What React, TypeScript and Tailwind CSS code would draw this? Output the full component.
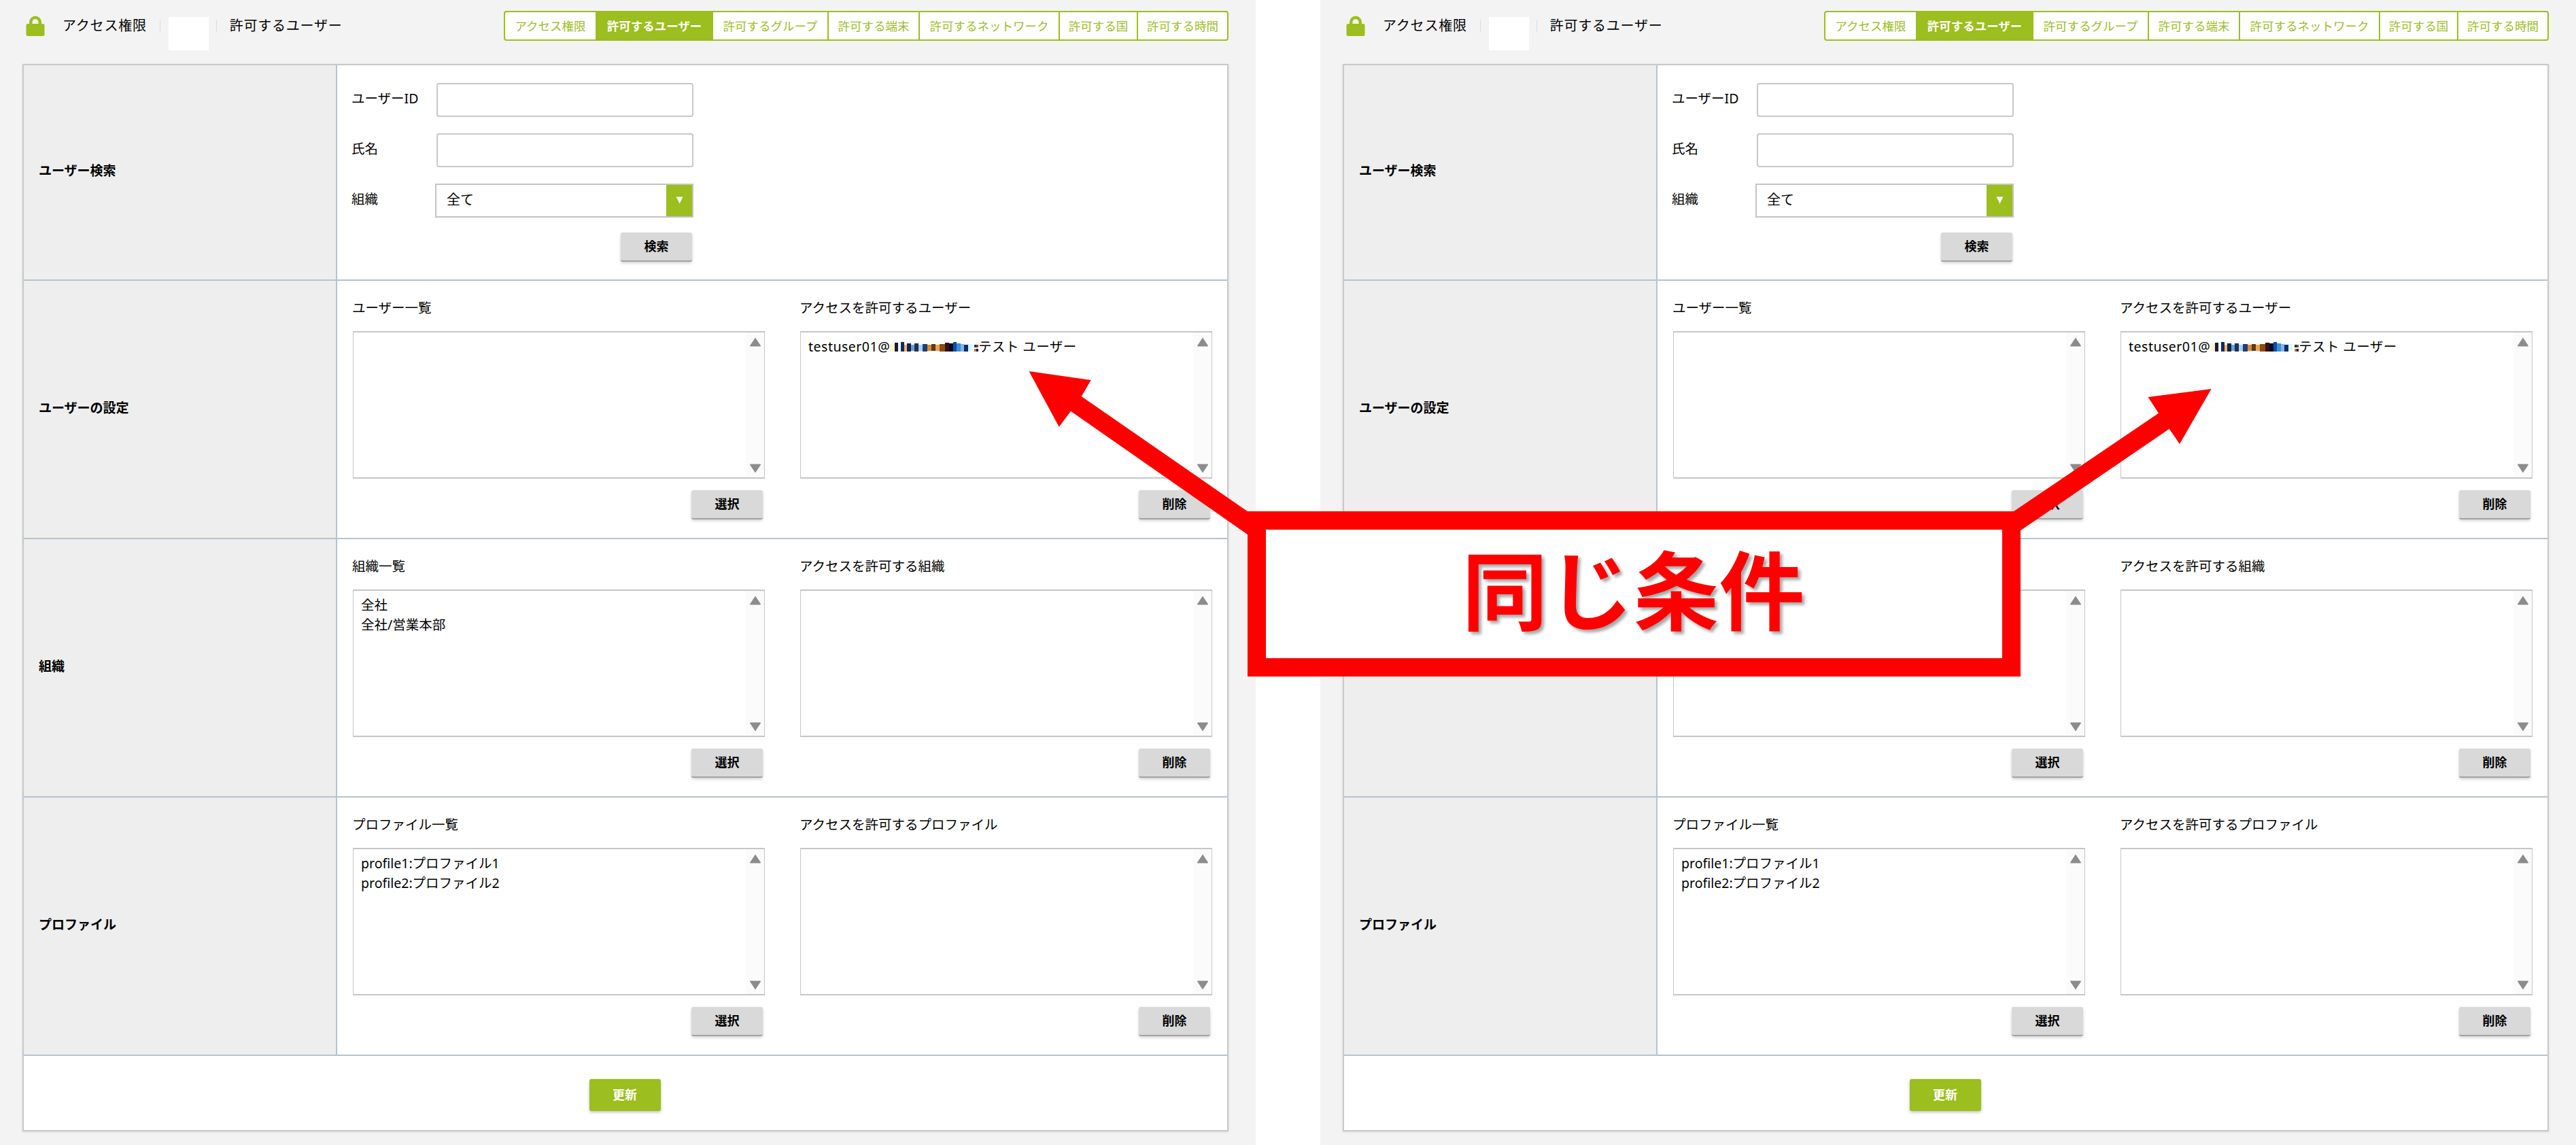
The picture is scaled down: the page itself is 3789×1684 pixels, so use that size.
import type { ReactNode } from "react";

const tabs: [string, string, boolean][] = [
  ["アクセス権限", "w-[133px]", false],
  ["許可するユーザー", "w-[171px]", true],
  ["許可するグループ", "w-[170px]", false],
  ["許可する端末", "w-[134px]", false],
  ["許可するネットワーク", "w-[206px]", false],
  ["許可する国", "w-[115px]", false],
  ["許可する時間", "w-[133px]", false],
];

function Lock() {
  return (
    <svg width="28" height="30" viewBox="0 0 28 30" className="shrink-0">
      <path d="M5 14V9.5a9 9 0 0 1 18 0V14h-4.5V9.5a4.5 4.5 0 0 0-9 0V14z" fill="#9cbe1e" />
      <rect x="0.5" y="12" width="27" height="18" rx="2.5" fill="#9cbe1e" />
    </svg>
  );
}

function Header() {
  return (
    <div className="flex h-[94px] items-start">
      <div className="ml-[5px] mt-[23px]">
        <Lock />
      </div>
      <span className="ml-[26px] mt-[23px] text-[20px] leading-[30px] tracking-[0.8px] text-black">アクセス権限</span>
      <div className="ml-[19px] mt-[29px] h-[18px] w-px bg-[#dddddd]" />
      <div className="ml-[12px] mt-[25px] h-[49px] w-[59px] bg-white" />
      <div className="ml-[11px] mt-[29px] h-[18px] w-px bg-[#dddddd]" />
      <span className="ml-[19px] mt-[23px] text-[20px] leading-[30px] tracking-[0.75px] text-black">許可するユーザー</span>
      <div className="ml-auto mt-[16px] flex h-[44px] overflow-hidden rounded-[4px] border-2 border-[#9cbe1e] bg-white">
        {tabs.map(([label, w, active], i) => (
          <div
            key={label}
            className={`${w} flex items-center justify-center text-[17.5px] ${i > 0 ? "border-l-2 border-[#9cbe1e]" : ""} ${active ? "bg-[#9cbe1e] font-bold text-white" : "text-[#9cbe1e]"}`}
          >
            {label}
          </div>
        ))}
      </div>
    </div>
  );
}

function Btn({ children }: { children: string }) {
  return (
    <button className="h-[43px] w-[105px] rounded-[3px] border-b-2 border-[#a3a3a3] bg-[#d9d9d9] text-[18px] font-bold text-black shadow-[0_2px_4px_rgba(0,0,0,0.18)]">
      {children}
    </button>
  );
}

function Noise() {
  const cells: [number, number, number, number, string][] = [
    [0, 7, 3, 10, "#fff3c8"], [7, 5, 1, 13, "#1a1a3a"], [12, 4, 5, 8, "#f7fbff"], [16, 5, 0, 14, "#0d2c6b"], [21, 4, 4, 10, "#f5b565"],
    [25, 6, 2, 12, "#11244f"], [31, 5, 4, 9, "#5aa7e0"], [36, 6, 2, 12, "#2b2b55"], [42, 6, 4, 9, "#9fd4f5"], [48, 7, 3, 11, "#1d3d7c"],
    [55, 6, 4, 9, "#d98a34"], [61, 6, 3, 10, "#5b3a1f"], [67, 6, 4, 9, "#f0a24a"], [73, 8, 3, 11, "#8a4a1a"], [81, 6, 1, 13, "#3a0f0f"],
    [87, 6, 2, 12, "#0a0a20"], [93, 5, 0, 14, "#0b4fa8"], [98, 6, 2, 12, "#3f8fd8"], [104, 5, 3, 11, "#7fb6e6"], [109, 6, 4, 10, "#0d2c6b"],
    [115, 6, 3, 10, "#d9f7fb"], [124, 3, 4, 4, "#22324f"], [124, 3, 10, 4, "#c8741f"], [127, 3, 4, 4, "#7a4a22"], [127, 3, 10, 4, "#0c1f4a"],
  ];
  return (
    <svg width="130" height="16" viewBox="0 0 130 16" className="inline-block align-[-2px]">
      {cells.map(([x, w, y, h, c], i) => (
        <rect key={i} x={x} y={y} width={w} height={h} fill={c} />
      ))}
    </svg>
  );
}

function ListBox({ lines }: { lines: ReactNode[] }) {
  return (
    <div className="flex h-[217px] border-2 border-x-[1.5px] border-[#c6c6c6] bg-white">
      <div className="flex-1 pl-[11px] pt-[6px] text-[19.5px] leading-[29px] text-black">
        {lines.map((l, i) => (
          <div key={i}>{l}</div>
        ))}
      </div>
      <div className="flex w-[27px] flex-col items-center justify-between bg-[#fbfbfb] pb-[6px] pt-[7px]">
        <svg width="18" height="14" viewBox="0 0 18 14"><path d="M9 0.5 17 12.5a1 1 0 0 1-1 1H2a1 1 0 0 1-1-1z" fill="#8c8c8c" /></svg>
        <svg width="18" height="14" viewBox="0 0 18 14"><path d="M2 0.5h14a1 1 0 0 1 1 1L9 13.5 1 1.5a1 1 0 0 1 1-1z" fill="#8c8c8c" /></svg>
      </div>
    </div>
  );
}

function Column({ title, lines, action }: { title: string; lines: ReactNode[]; action: string }) {
  return (
    <div>
      <div className="mb-[20px] -ml-[1px] h-[28px] text-[19.5px] leading-[28px] text-black">{title}</div>
      <ListBox lines={lines} />
      <div className="mt-[17px] flex justify-end pr-[3px]">
        <Btn>{action}</Btn>
      </div>
    </div>
  );
}

function RowLabel({ children }: { children: string }) {
  return (
    <div className="flex w-[461px] shrink-0 items-center border-r-2 border-[#b4c4ce] bg-[#eeeeee] pb-[4px] pl-[22px] text-[19px] font-bold text-black">
      {children}
    </div>
  );
}

function Row({ label, left, leftLines, right, rightLines }: { label: string; left: string; leftLines: ReactNode[]; right: string; rightLines: ReactNode[] }) {
  return (
    <div className="flex h-[380px] border-b-2 border-[#b4c4ce]">
      <RowLabel>{label}</RowLabel>
      <div className="grid flex-1 grid-cols-2 gap-x-[52px] pl-[23px] pr-[22px] pt-[26px]">
        <Column title={left} lines={leftLines} action="選択" />
        <Column title={right} lines={rightLines} action="削除" />
      </div>
    </div>
  );
}

function Field({ label }: { label: string }) {
  return (
    <div className="flex h-[50px] items-center">
      <span className="w-[125px] pb-[4px] text-[19.5px] text-black">{label}</span>
      <input className="h-[50px] w-[378px] rounded-[4px] border-2 border-[#c8c8c8] bg-white" readOnly />
    </div>
  );
}

function Screen() {
  return (
    <div className="h-full w-[1847px] shrink-0 bg-[#f3f3f3] pl-[33px] pr-[40px]">
      <Header />
      <div className="border-2 border-[#c9c9c9] bg-white shadow-[0_1px_3px_rgba(0,0,0,0.12)]">
        <div className="flex h-[317px] border-b-2 border-[#b4c4ce]">
          <RowLabel>ユーザー検索</RowLabel>
          <div className="flex flex-1 flex-col gap-[24px] pl-[21px] pt-[26px]">
            <Field label="ユーザーID" />
            <Field label="氏名" />
            <div className="flex h-[50px] items-center">
              <span className="w-[123px] pb-[4px] text-[19.5px] text-black">組織</span>
              <div className="flex h-[50px] w-[380px] border-2 border-[#c4c4c4] bg-white">
                <span className="flex-1 pl-[15px] text-[20px] leading-[44px] text-black">全て</span>
                <div className="flex w-[38px] items-center justify-center bg-[#9cbe1e] pb-[2px]">
                  <svg width="11" height="11" viewBox="0 0 11 11"><path d="M0.5 0.5h10L5.5 10.5z" fill="#fff" /></svg>
                </div>
              </div>
            </div>
            <div className="-mt-[2px] w-[501px] text-right">
              <Btn>検索</Btn>
            </div>
          </div>
        </div>
        <Row
          label="ユーザーの設定"
          left="ユーザー一覧"
          leftLines={[]}
          right="アクセスを許可するユーザー"
          rightLines={[<span key="u" className="whitespace-nowrap"><span className="tracking-[0.5px]">testuser01@</span><Noise /><span className="tracking-[0.4px]">テスト ユーザー</span></span>]}
        />
        <Row label="組織" left="組織一覧" leftLines={["全社", "全社/営業本部"]} right="アクセスを許可する組織" rightLines={[]} />
        <Row label="プロファイル" left="プロファイル一覧" leftLines={["profile1:プロファイル1", "profile2:プロファイル2"]} right="アクセスを許可するプロファイル" rightLines={[]} />
        <div className="flex h-[109px] items-start justify-center pr-[2px] pt-[34px]">
          <button className="h-[47px] w-[105px] rounded-[3px] bg-[#9cbe1e] text-[18px] font-bold text-white shadow-[0_2px_4px_rgba(0,0,0,0.25)]">更新</button>
        </div>
      </div>
    </div>
  );
}

export default function App() {
  return (
    <div className="relative flex h-[1684px] w-[3789px] overflow-hidden bg-white font-['Noto_Sans','Noto_Sans_CJK_JP',sans-serif]">
      <Screen />
      <div className="w-[95px] shrink-0" />
      <Screen />
      <svg className="pointer-events-none absolute left-0 top-0" width="3789" height="1684" viewBox="0 0 3789 1684">
        <polygon fill="#ff0000" points="1513.5,546 1604.7,559 1590.7,583 1834.8,752 1861,752 1861,790 1834.8,786 1575,604.7 1557.7,627.7" />
        <polygon fill="#ff0000" points="3252.6,572 3159.6,584 3175,607.7 2962,752 2945,760 2950,782 2972.3,780 3190.8,630.7 3206,653" />
      </svg>
      <div className="absolute left-[1835px] top-[752px] flex h-[243px] w-[1137px] items-center justify-center border-[27px] border-[#ff0000] bg-white">
        <span className="-mt-[12px] -ml-[2px] whitespace-nowrap text-[126px] font-bold leading-none text-[#ff0000] [text-shadow:4px_4px_4px_rgba(0,0,0,0.35)]">同じ条件</span>
      </div>
    </div>
  );
}
